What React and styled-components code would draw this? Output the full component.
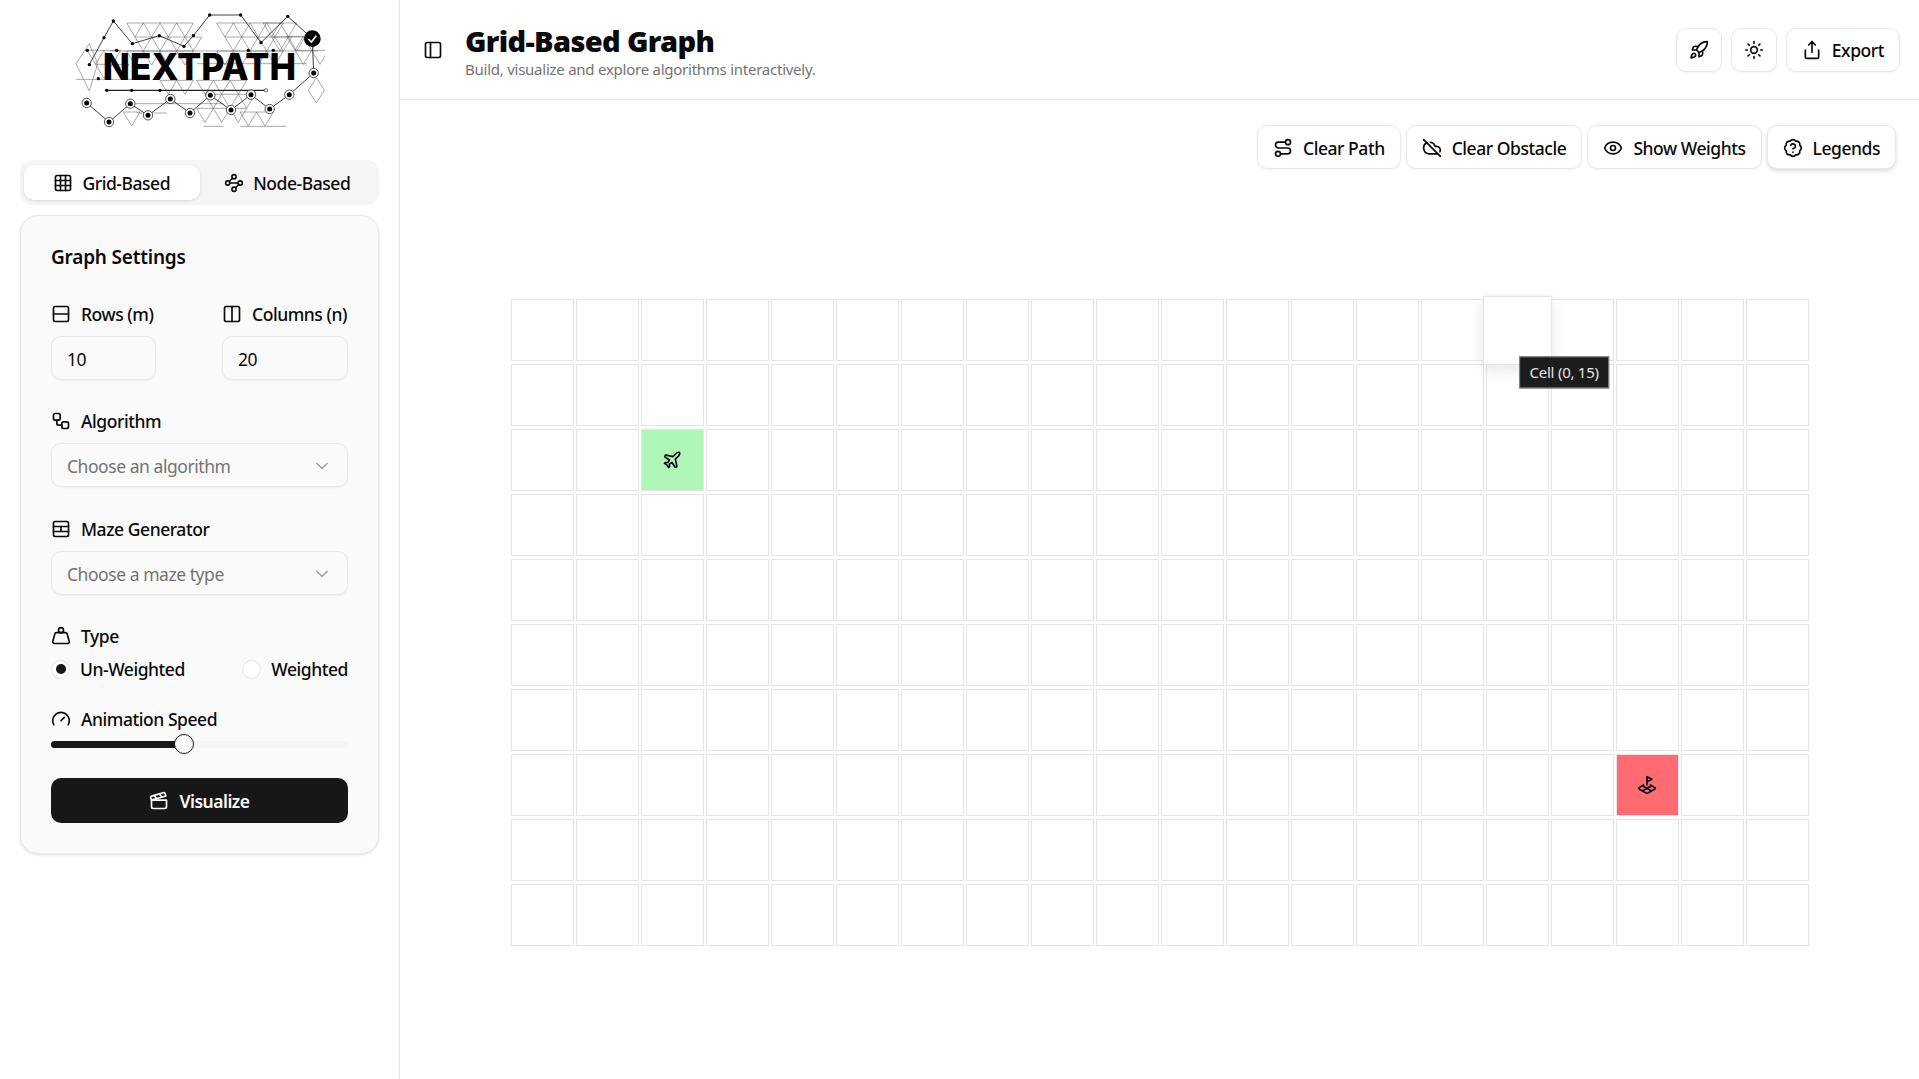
import React from 'react';
import styled, { createGlobalStyle } from 'styled-components';
import {
  Grid3x3, Waypoints, Rows2, Columns2, Workflow, ChevronDown, Weight, Gauge, Clapperboard,
  PanelLeft, Rocket, Sun, Share, Route, CloudOff, Eye, BadgeQuestionMark, Plane, LandPlot,
} from 'lucide-react';

const FONT = `"Noto Sans", "Open Sans", sans-serif`;

const GlobalStyle = createGlobalStyle`
  html, body { margin: 0; padding: 0; background: #fff; }
  body { font-family: ${FONT}; color: #0a0a0a; }
  * { box-sizing: border-box; }
`;

const Page = styled.div`
  display: flex;
  width: 100%;
  height: 1079px;
  overflow: hidden;
`;

const Sidebar = styled.aside`
  width: 400px;
  flex: none;
  border-right: 1px solid #e5e5e5;
  padding: 13px 20px 0;
  display: flex;
  flex-direction: column;
`;

const LogoWrap = styled.div`
  height: 115px;
  margin-bottom: 32px;
  display: flex;
  justify-content: center;
`;

const Tabs = styled.div`
  display: flex;
  height: 45px;
  padding: 5px 4px;
  background: #f5f5f5;
  border-radius: 12px;
  margin-bottom: 10px;
`;

const Tab = styled.div`
  flex: 1;
  display: flex;
  align-items: center;
  justify-content: center;
  gap: 9px;
  font-size: 17.5px;
  letter-spacing: -0.45px;
  font-weight: 500;
  border-radius: 10px;
  background: ${(p) => (p.$active ? '#fff' : 'transparent')};
  box-shadow: ${(p) => (p.$active ? '0 1px 3px rgba(0,0,0,.12)' : 'none')};
`;

const Card = styled.section`
  height: 639px;
  padding: 26px 30px 0;
  background: #fafafa;
  border: 1px solid #e8e8e8;
  border-radius: 18px;
  box-shadow: 0 1px 3px rgba(0,0,0,.12);
`;

const CardTitle = styled.h2`
  margin: 0 0 30px;
  font-size: 19px;
  line-height: 30px;
  font-weight: 600;
  letter-spacing: -0.2px;
`;

const SizeRow = styled.div`
  display: flex;
  justify-content: space-between;
  margin-bottom: 29px;
`;

const Field = styled.div`
  width: ${(p) => p.$w || 'auto'};
  margin-bottom: ${(p) => p.$mb || '0'};
`;

const Label = styled.div`
  display: flex;
  align-items: center;
  gap: 10px;
  height: 24px;
  margin-bottom: ${(p) => p.$mb || '10px'};
  font-size: 17.5px;
  font-weight: 500;
  letter-spacing: -0.45px;
  white-space: nowrap;
`;

const InputBox = styled.div`
  height: 44px;
  padding: 1px 0 0 15px;
  display: flex;
  align-items: center;
  font-size: 17.5px;
  letter-spacing: -0.45px;
  background: #fafafa;
  border: 1px solid #e8e8e8;
  border-radius: 10px;
  box-shadow: 0 1px 2px rgba(0,0,0,.05);
`;

const SelectBox = styled(InputBox)`
  justify-content: space-between;
  padding-right: 15px;
  color: #737373;
  svg { color: #a3a3a3; }
`;

const RadioRow = styled.div`
  display: flex;
  justify-content: space-between;
  margin-bottom: 26px;
`;

const RadioItem = styled.div`
  display: flex;
  align-items: center;
  gap: 10px;
  font-size: 17.5px;
  font-weight: 500;
  letter-spacing: -0.45px;
`;

const RadioDot = styled.span`
  width: 19px;
  height: 19px;
  border-radius: 50%;
  background: #fff;
  border: 1px solid #e5e5e5;
  display: flex;
  align-items: center;
  justify-content: center;
  &::after {
    content: '';
    display: ${(p) => (p.$on ? 'block' : 'none')};
    width: 10px;
    height: 10px;
    border-radius: 50%;
    background: #171717;
  }
`;

const Track = styled.div`
  position: relative;
  height: 7px;
  margin: 2px 0 30px;
  background: #f5f5f5;
  border-radius: 4px;
`;

const TrackFill = styled.div`
  height: 100%;
  background: #171717;
  border-radius: 4px;
`;

const Thumb = styled.div`
  position: absolute;
  top: -7px;
  width: 20px;
  height: 20px;
  margin-left: -10px;
  background: #fff;
  border: 1.5px solid #171717;
  border-radius: 50%;
`;

const VisualizeButton = styled.button`
  width: 100%;
  height: 45px;
  border: 0;
  border-radius: 10px;
  background: #171717;
  color: #fafafa;
  font-family: ${FONT};
  font-size: 17.5px;
  font-weight: 600;
  letter-spacing: -0.5px;
  display: flex;
  align-items: center;
  justify-content: center;
  gap: 10px;
`;

const Main = styled.main`
  flex: 1;
  min-width: 0;
  display: flex;
  flex-direction: column;
`;

const Header = styled.header`
  height: 100px;
  flex: none;
  border-bottom: 1px solid #e5e5e5;
  padding: 0 19px 0 23px;
  display: flex;
  align-items: center;
`;

const TitleBlock = styled.div`
  margin-left: 22px;
  flex: 1;
  padding-top: 2px;
`;

const Title = styled.h1`
  margin: 0;
  font-size: 29px;
  line-height: 36px;
  font-weight: 900;
  letter-spacing: -0.65px;
`;

const Subtitle = styled.p`
  margin: 1px 0 0;
  font-size: 15px;
  line-height: 18px;
  color: #737373;
  letter-spacing: -0.25px;
`;

const HeaderActions = styled.div`
  display: flex;
  gap: 9px;
`;

const OutlineButton = styled.div`
  height: 44px;
  min-width: ${(p) => (p.$icon ? '46px' : 'auto')};
  padding: ${(p) => (p.$icon ? '0' : '1px 15px 0')};
  display: flex;
  align-items: center;
  justify-content: center;
  gap: 10px;
  background: #fff;
  border: 1px solid #e8e8e8;
  border-radius: 10px;
  box-shadow: ${(p) => (p.$raised ? '0 2px 4px rgba(0,0,0,.14)' : '0 1px 2px rgba(0,0,0,.05)')};
  font-size: 17.5px;
  font-weight: 500;
  letter-spacing: -0.45px;
  white-space: nowrap;
`;

const Toolbar = styled.div`
  display: flex;
  justify-content: flex-end;
  gap: 5px;
  padding: 25px 23px 0 0;
`;

const GridArea = styled.div`
  padding: 129.5px 0 0 111px;
`;

const Board = styled.div`
  display: grid;
  grid-template-columns: repeat(20, 62.5px);
  grid-auto-rows: 62.5px;
  gap: 2.5px;
  width: max-content;
`;

const Cell = styled.div`
  position: relative;
  display: flex;
  align-items: center;
  justify-content: center;
  background: ${(p) => p.$bg || '#fff'};
  border: 1px solid #e5e5e5;
  ${(p) =>
    p.$hover &&
    `
    transform: scale(1.1);
    z-index: 2;
    box-shadow: 0 4px 12px rgba(0,0,0,.1);
  `}
`;

const Tooltip = styled.div`
  position: absolute;
  left: 31.5px;
  top: 53.5px;
  width: 90px;
  height: 32px;
  display: flex;
  align-items: center;
  justify-content: center;
  background: #1c1c1c;
  border: 1px solid #8a8a8a;
  color: #e5e5e5;
  font-size: 15px;
  letter-spacing: -0.25px;
  white-space: nowrap;
  transform: scale(0.909);
  transform-origin: top left;
  z-index: 3;
`;

// triangular mesh patches of the logo, coordinates are 3x page px
const MESH = [
  { x: 380, y: 68, cols: 4, rows: 3 },
  { x: 650, y: 68, cols: 4, rows: 3 },
  { x: 790, y: 68, cols: 2, rows: 2 },
  { x: 262, y: 150, cols: 2, rows: 2 },
  { x: 590, y: 240, cols: 3, rows: 3 },
  { x: 370, y: 335, cols: 1, rows: 1 },
  { x: 720, y: 335, cols: 2, rows: 1 },
  { x: 480, y: 240, cols: 2, rows: 1 },
  { x: 860, y: 108, cols: 2, rows: 2 },
];

const meshLines = () => {
  const out = [];
  MESH.forEach((m, i) => {
    for (let r = 0; r < m.rows; r++) {
      for (let c = 0; c < m.cols; c++) {
        const x = m.x + c * 50 + (r % 2 ? 25 : 0);
        const y = m.y + r * 42;
        out.push(<path key={`${i}-${r}-${c}`} d={`M${x} ${y}h50l-25 42z`} />);
      }
    }
  });
  return out;
};

const CHAIN = [
  [260, 308], [327, 365], [391, 310], [444, 345], [511, 296], [570, 338],
  [631, 285], [693, 329], [753, 283], [809, 326], [868, 283], [941, 218],
];

const TOP_DOTS = [
  [340, 62], [312, 112], [268, 193], [397, 130], [478, 106], [552, 138], [580, 106],
  [629, 44], [722, 44], [783, 127], [863, 48], [350, 150], [262, 150], [295, 235],
  [745, 150], [820, 150], [320, 270], [395, 270], [480, 270],
];

const Logo = () => (
  <svg width="250" height="115" viewBox="225 38 750 345">
    <g fill="none" stroke="#555" strokeWidth="1.5">
      {meshLines()}
      <path d="M228 237h170M228 190l40-60 25 60-25 82zM925 270l24-38 24 38-24 38z" />
      <path d="M330 152h625M590 190h330M400 310h270M500 338h-90M610 378h60M720 378h140" />
    </g>
    <g fill="none" stroke="#222" strokeWidth="2.6">
      <path d="M268 193L312 112L340 62L397 130L478 106L552 138L580 106L629 44H722L783 127L863 48L937 115L941 218" />
      <path d="M320 270H798" strokeWidth="4" />
      <polyline points={CHAIN.map((p) => p.join(',')).join(' ')} />
    </g>
    <circle cx="798" cy="270" r="5" fill="#fff" stroke="#222" strokeWidth="2" />
    {TOP_DOTS.map(([x, y]) => (
      <circle key={`${x}-${y}`} cx={x} cy={y} r="5" fill="#000" />
    ))}
    {CHAIN.map(([x, y]) => (
      <g key={x}>
        <circle cx={x} cy={y} r="14" fill="#fff" stroke="#333" strokeWidth="2.5" />
        <circle cx={x} cy={y} r="7.5" fill="#000" />
      </g>
    ))}
    <circle cx="937" cy="115" r="25" fill="#000" />
    <path d="M925 116l9 9 15-19" fill="none" stroke="#fff" strokeWidth="4.5" />
    <text
      x="308"
      y="240"
      fontFamily="Inter, sans-serif"
      fontWeight="800"
      fontSize="111"
      textLength="580"
      lengthAdjust="spacingAndGlyphs"
      fill="#000"
    >
      NEXTPATH
    </text>
  </svg>
);

const MazeIcon = () => (
  <svg width="20" height="20" viewBox="0 0 24 24" fill="none" stroke="currentColor" strokeWidth="2" strokeLinecap="round" strokeLinejoin="round">
    <rect x="3" y="3" width="18" height="18" rx="2" />
    <path d="M3 9h18M3 15h18M12 9v6" />
  </svg>
);

const ROWS = 10;
const COLS = 20;

export default function App() {
  const cells = [];
  for (let r = 0; r < ROWS; r++) {
    for (let c = 0; c < COLS; c++) {
      const start = r === 2 && c === 2;
      const end = r === 7 && c === 17;
      const hover = r === 0 && c === 15;
      cells.push(
        <Cell key={`${r}-${c}`} $bg={start ? '#aef7b8' : end ? '#ff6b70' : null} $hover={hover}>
          {start && <Plane size={20} strokeWidth={2} />}
          {end && <LandPlot size={20} strokeWidth={2} />}
          {hover && <Tooltip>Cell (0, 15)</Tooltip>}
        </Cell>
      );
    }
  }

  return (
    <Page>
      <GlobalStyle />
      <Sidebar>
        <LogoWrap>
          <Logo />
        </LogoWrap>
        <Tabs>
          <Tab $active>
            <Grid3x3 size={20} />
            Grid-Based
          </Tab>
          <Tab>
            <Waypoints size={20} />
            Node-Based
          </Tab>
        </Tabs>
        <Card>
          <CardTitle>Graph Settings</CardTitle>
          <SizeRow>
            <Field $w="105px">
              <Label>
                <Rows2 size={20} />
                Rows (m)
              </Label>
              <InputBox>10</InputBox>
            </Field>
            <Field $w="126px">
              <Label>
                <Columns2 size={20} />
                Columns (n)
              </Label>
              <InputBox>20</InputBox>
            </Field>
          </SizeRow>
          <Field $mb="30px">
            <Label>
              <Workflow size={20} />
              Algorithm
            </Label>
            <SelectBox>
              Choose an algorithm
              <ChevronDown size={20} />
            </SelectBox>
          </Field>
          <Field $mb="29px">
            <Label>
              <MazeIcon />
              Maze Generator
            </Label>
            <SelectBox>
              Choose a maze type
              <ChevronDown size={20} />
            </SelectBox>
          </Field>
          <Label $mb="9px">
            <Weight size={20} />
            Type
          </Label>
          <RadioRow>
            <RadioItem>
              <RadioDot $on />
              Un-Weighted
            </RadioItem>
            <RadioItem>
              <RadioDot />
              Weighted
            </RadioItem>
          </RadioRow>
          <Label $mb="10px">
            <Gauge size={20} />
            Animation Speed
          </Label>
          <Track>
            <TrackFill style={{ width: '44.7%' }} />
            <Thumb style={{ left: '44.7%' }} />
          </Track>
          <VisualizeButton>
            <Clapperboard size={20} />
            Visualize
          </VisualizeButton>
        </Card>
      </Sidebar>
      <Main>
        <Header>
          <PanelLeft size={20} />
          <TitleBlock>
            <Title>Grid-Based Graph</Title>
            <Subtitle>Build, visualize and explore algorithms interactively.</Subtitle>
          </TitleBlock>
          <HeaderActions>
            <OutlineButton $icon>
              <Rocket size={20} />
            </OutlineButton>
            <OutlineButton $icon>
              <Sun size={20} />
            </OutlineButton>
            <OutlineButton>
              <Share size={20} />
              Export
            </OutlineButton>
          </HeaderActions>
        </Header>
        <Toolbar>
          <OutlineButton>
            <Route size={20} />
            Clear Path
          </OutlineButton>
          <OutlineButton>
            <CloudOff size={20} />
            Clear Obstacle
          </OutlineButton>
          <OutlineButton>
            <Eye size={20} />
            Show Weights
          </OutlineButton>
          <OutlineButton $raised>
            <BadgeQuestionMark size={20} />
            Legends
          </OutlineButton>
        </Toolbar>
        <GridArea>
          <Board>{cells}</Board>
        </GridArea>
      </Main>
    </Page>
  );
}
